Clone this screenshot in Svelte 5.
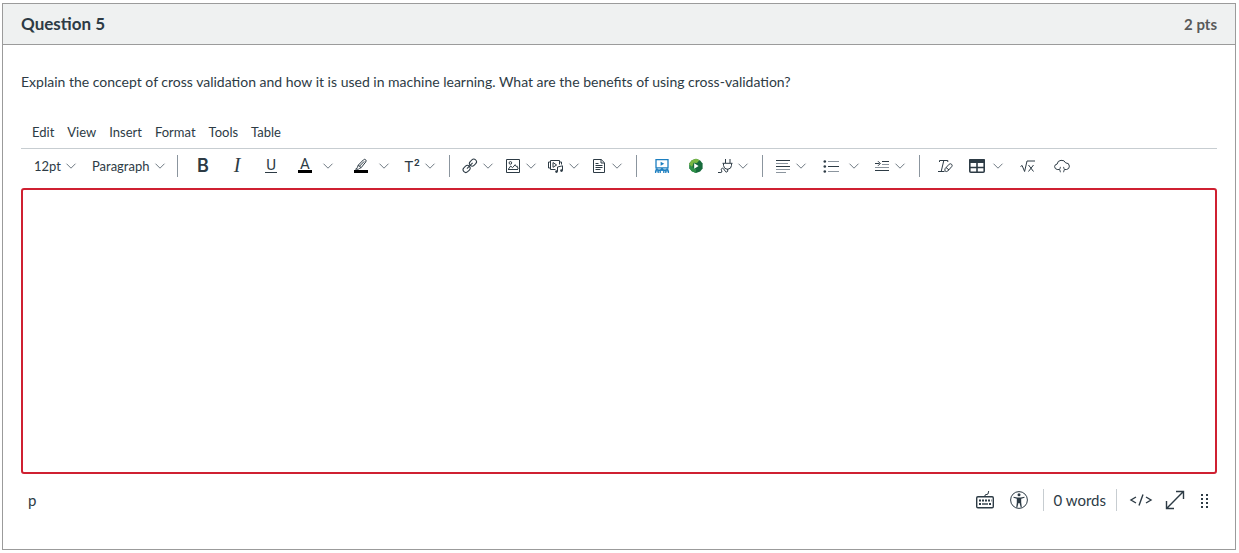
<script>
  const menus = ['Edit', 'View', 'Insert', 'Format', 'Tools', 'Table'];
  let content = $state('');
  const words = $derived(content.trim() ? content.trim().split(/\s+/).length : 0);

  const groups = [
    [
      { id: 'bold', label: 'Bold' },
      { id: 'italic', label: 'Italic' },
      { id: 'underline', label: 'Underline' },
      { id: 'color', label: 'Text color', kind: 'split' },
      { id: 'highlight', label: 'Background color', kind: 'split' },
      { id: 'super', label: 'Superscript and subscript', kind: 'menu' }
    ],
    [
      { id: 'link', label: 'Links', kind: 'menu' },
      { id: 'image', label: 'Images', kind: 'menu' },
      { id: 'media', label: 'Record or upload media', kind: 'menu' },
      { id: 'doc', label: 'Documents', kind: 'menu' }
    ],
    [
      { id: 'studio', label: 'Studio' },
      { id: 'video', label: 'Video library' },
      { id: 'plug', label: 'Apps', kind: 'menu' }
    ],
    [
      { id: 'align', label: 'Align', kind: 'menu' },
      { id: 'list', label: 'Lists', kind: 'split' },
      { id: 'indent', label: 'Indent', kind: 'menu' }
    ],
    [
      { id: 'clear', label: 'Clear formatting' },
      { id: 'table', label: 'Table', kind: 'wide' },
      { id: 'math', label: 'Insert math equation' },
      { id: 'embed', label: 'Embed' }
    ]
  ];
</script>

{#snippet chevron()}
  <svg class="chevron" viewBox="0 0 10 6" aria-hidden="true"><path d="M.5.7 5 5.2 9.5.7" /></svg>
{/snippet}

{#snippet icon(id)}
  <svg class="icon" viewBox="0 0 16 16" aria-hidden="true">
    {#if id === 'bold'}
      <text class="bold" x="8" y="14" text-anchor="middle">B</text>
    {:else if id === 'italic'}
      <text class="italic" x="8" y="14" text-anchor="middle">I</text>
    {:else if id === 'underline'}
      <text class="thin" x="8" y="12" text-anchor="middle">U</text>
      <path d="M2 14.5h12" />
    {:else if id === 'color'}
      <text class="thin" x="8" y="11" text-anchor="middle">A</text>
      <path class="black" d="M1 12h14v3H1z" />
    {:else if id === 'highlight'}
      <path class="black" d="M1 12h14v3H1z" />
      <path d="m5.2 7.2 5.3-5.4q1.2-1 2.2 0t0 2.2L8.2 9.6zM5.2 7.2l-.7 2.2-1.9 1.8h3l.8-.8 1.8-.8M6.5 8.2l4.7-4.8" />
    {:else if id === 'super'}
      <text class="tee" x="0" y="14">T</text>
      <text class="two" x="10" y="8">2</text>
    {:else if id === 'link'}
      <g transform="rotate(-45 8 8)">
        <rect x="-.3" y="5" width="7.6" height="5.4" rx="2.6" />
        <rect x="8.7" y="5" width="7.6" height="5.4" rx="2.6" />
        <path d="M4 7.7h8" />
      </g>
    {:else if id === 'image'}
      <path d="M1.5 1.5h13v13h-13zM3 11.5h10M3.5 11l2.2-3 1.8 1.7 2.7-3 1.2 2 .8-.5 1 2.8" />
      <circle cx="5.4" cy="4.9" r="1.3" />
    {:else if id === 'media'}
      <path d="M7.5 11.5h-5v-9h9v4M2.5 4h-2v6h2M11.5 4h2v2.5M5 4.5v4.8L8.6 7zM9.5 13.5V9l5-1.2v4.7" />
      <circle class="solid" cx="8.5" cy="13.6" r="1.3" />
      <circle class="solid" cx="13.5" cy="12.6" r="1.3" />
    {:else if id === 'doc'}
      <path d="M2.5 1.5h7.7l3.3 3.3v9.7h-11zM10 1.5V5h3.5M4.5 5.5h3M4.5 7.5h7M4.5 9.5h7M4.5 11.5h5" />
    {:else if id === 'studio'}
      <g class="blue">
        <path d="M2 1.7h12v8.2H2z" />
        <path class="solid" d="m6.6 3.8 3.7 2-3.7 2z" />
        <path d="M1.6 15v-2.2h2.6V15M6.2 15v-3h3.6v3M11.8 15v-2.2h2.6V15M4.2 11.5l2 1.5M11.8 11.5l-2 1.5" />
        <g class="solid"><circle cx="2.8" cy="11.5" r="1.2" /><circle cx="8" cy="11.3" r="1.4" /><circle cx="13.2" cy="11.5" r="1.2" /></g>
      </g>
    {:else if id === 'video'}
      <path class="leaf c" d="m8 .8 4.2 1.7 2.4 3v5l-2.4 3L8 15l-4.2-1.8-2.4-3v-5l2.4-3z" />
      <path class="leaf a" d="M8 .8 11.5 2 9 5 5.6 4.8 4 9.5 1.4 7V5.2l2.4-3z" />
      <path class="leaf b" d="m1.4 6.5 3.4 3 3.4 1.8L7.8 15l-4-1.8-2.4-3z" />
      <path class="white" d="m6.2 5.3 4.4 2.7-4.4 2.7z" />
    {:else if id === 'plug'}
      <path d="M8.5 1v4M13 1v4M5.5 5.3h10M6.5 5.5v2q.4 3.4 3.5 3.7h1q3.2-.3 3.5-3.7v-2M10.7 11v2.2q-.6 1.5-2 .6L6.5 10.7q-1.1-1-2 0-.7 1.1.2 2.1.7 1.6-.8 1.7H1" />
    {:else if id === 'align'}
      <path d="M1 2.5h14M1 8.5h14" />
      <path class="soft" d="M1 5.5h12M1 11.5h14M1 14.5h10" />
    {:else if id === 'list'}
      <path class="soft" d="M5 3.5h11M5 13.5h11" />
      <path d="M5 8.5h11" />
      <g class="solid"><circle cx="1.8" cy="3.5" r="1.3" /><circle cx="1.8" cy="8.5" r="1.3" /><circle cx="1.8" cy="13.5" r="1.3" /></g>
    {:else if id === 'indent'}
      <path d="M8 3.5h7M1 12.5h14M1 5.5h4.5M4 3.2l2.3 2.3L4 7.8" />
      <path class="soft" d="M8 6.5h7M1 9.5h14" />
    {:else if id === 'clear'}
      <path d="M2.5 4V2.5h8.3V4M6.8 2.5 4.2 13.5M1 13.5h6.5M8.2 10.5l4-4.3q1.2-.9 2.3 0 1.2 1 .3 2.3l-4 4.5q-1.4 1-2.5.2-1-.9-.1-2.7zM9 9.5l3 2.4" />
    {:else if id === 'table'}
      <rect class="frame" x=".8" y="1.8" width="14.4" height="12.4" rx="1" />
      <path class="frame" d="M8 4v10M1 9.5h14" />
      <path class="solid" d="M0 2q0-1 1-1h14q1 0 1 1v3H0z" />
    {:else if id === 'math'}
      <path d="m.5 8.5 1.6-1 2.5 6L7 3h8M8.5 7l5 6.5M13.5 7l-5 6.5" />
    {:else if id === 'embed'}
      <path d="M5 11.5H3.2Q.7 11 .6 8.6q.2-2.3 2.5-2.5Q3.5 2.7 7 2.3q3.5-.3 4.7 2.6 3.4-.2 3.7 3.2 0 3-2.8 3.4H11M6.8 9.2q-1 .1-.8 1.3 0 1-.7 1.1.8.1.7 1.1-.1 1.2.8 1.3M9.2 9.2q1 .1.8 1.3 0 1 .7 1.1-.8.1-.7 1.1.1 1.2-.8 1.3" />
    {/if}
  </svg>
{/snippet}

<main class="question">
  <header>
    <h1>Question 5</h1>
    <span class="points">2 pts</span>
  </header>

  <div class="body">
    <label class="prompt" for="answer">Explain the concept of cross validation and how it is used in machine learning. What are the benefits of using cross-validation?</label>

    <nav class="menubar" aria-label="Editor menu">
      {#each menus as name}
        <button type="button">{name}</button>
      {/each}
    </nav>

    <div class="toolbar" role="toolbar" aria-label="Formatting">
      <div class="group text">
        <button type="button" class="size">12pt {@render chevron()}</button>
        <button type="button" class="size">Paragraph {@render chevron()}</button>
      </div>
      {#each groups as group}
        <div class="group">
          {#each group as tool}
            {#if tool.kind === 'split'}
              <div class="split">
                <button type="button" class="tool" aria-label={tool.label}>{@render icon(tool.id)}</button>
                <button type="button" class="more" aria-label="{tool.label} options">{@render chevron()}</button>
              </div>
            {:else}
              <button type="button" class={tool.kind ?? 'tool'} aria-label={tool.label}>
                {@render icon(tool.id)}
                {#if tool.kind}{@render chevron()}{/if}
              </button>
            {/if}
          {/each}
        </div>
      {/each}
    </div>

    <textarea id="answer" bind:value={content}></textarea>

    <footer>
      <span>p</span>
      <div class="status">
        <button type="button" aria-label="Keyboard shortcuts">
          <svg class="big" viewBox="0 0 20 20" aria-hidden="true">
            <rect class="case" x="1.7" y="6.7" width="16.6" height="11" rx="1.2" />
            <path d="M10 6.5V5l3-1 .7-3" />
            <path class="keys" d="M4 10.5h12.5M4 14h2" /><path class="keys" d="M14 14h2.3" /><path class="case" d="M7 14h6" />
          </svg>
        </button>
        <button type="button" aria-label="Accessibility checker">
          <svg class="big" viewBox="0 0 20 20" aria-hidden="true">
            <circle cx="10" cy="10" r="8.4" />
            <circle class="solid" cx="10" cy="4.8" r="1.5" />
            <path class="solid" d="M4.5 6.7 8.3 7.4h3.4l3.8-.7v1l-3.3 1v3.6l.6 4.9h-1.1L10.5 13h-1l-1.2 4.6H7.2l.6-4.9V8.7l-3.3-1z" />
          </svg>
        </button>
        <span class="count">{words} words</span>
        <button type="button" class="code" aria-label="HTML editor">
          <svg class="wide-icon" viewBox="0 0 24 20" aria-hidden="true"><path class="line" d="m7 7-5 3 5 3M17 7l5 3-5 3M14 4.5 10 15.5" /></svg>
        </button>
        <button type="button" aria-label="Fullscreen">
          <svg class="big" viewBox="0 0 20 20" aria-hidden="true"><path class="line" d="M1.6 18.4 18.4 1.6M11 1.5h7.5V9M1.5 11v7.5H9" /></svg>
        </button>
        <button type="button" aria-label="Resize editor">
          <svg class="grip" viewBox="0 0 10 16" aria-hidden="true"><path class="dots" d="M2 3h2M2 7h2M2 11h2M2 15h2M7 3h2M7 7h2M7 11h2M7 15h2" /></svg>
        </button>
      </div>
    </footer>
  </div>
</main>

<style>
  :global(body) { background: #fff; }
  .question {
    margin: 3px 3px 3px 2px;
    border: 1px solid #9b9b9b;
    font-family: Lato, "Liberation Sans", sans-serif;
    color: #2d3b45;
  }
  header {
    display: flex;
    align-items: center;
    justify-content: space-between;
    height: 40px;
    padding: 0 18px;
    background: #eff1f1;
    border-bottom: 1px solid #9b9b9b;
  }
  h1 { margin: 0; font-size: 17px; line-height: 24px; }
  .points { font-size: 15px; font-weight: 700; line-height: 24px; color: #595959; }
  .body { padding: 26px 18px 38px; }
  .prompt { display: block; font-size: 14px; line-height: 22px; }
  button {
    display: flex;
    align-items: center;
    flex: none;
    margin: 0;
    padding: 0;
    border: 0;
    background: none;
    color: inherit;
    font: inherit;
    cursor: pointer;
  }
  .menubar {
    display: flex;
    gap: 13px;
    margin-top: 26px;
    padding: 0 11px 3px;
    border-bottom: 1px solid #c7cdd1;
    font-size: 13px;
    line-height: 26px;
  }
  .toolbar { display: flex; align-items: center; padding: 6px 0 11px; }
  .group { display: flex; flex: none; align-items: center; height: 22px; padding: 0 6px 0 8px; }
  .group + .group { border-left: 1px solid #8b959e; }
  .text { padding: 0 12px 0 13px; gap: 16px; font-size: 13px; }
  .size { gap: 5px; }
  .tool { width: 34px; height: 22px; justify-content: center; }
  .split { display: flex; padding-right: 10px; }
  .more { width: 12px; justify-content: center; }
  .menu { width: 43px; height: 22px; padding-left: 4px; gap: 5px; }
  .wide { width: 49px; height: 22px; padding-left: 7px; gap: 8px; }
  svg {
    flex: none;
    display: block;
    fill: none;
    stroke: #2d3b45;
    stroke-width: 1;
    overflow: visible;
  }
  .icon { width: 16px; height: 16px; }
  .chevron { width: 10px; height: 6px; stroke: #6f7a83; }
  .black { fill: #000; stroke: none; }
  .solid { fill: #2d3b45; stroke: none; }
  .soft { stroke: #8b959e; }
  .frame { stroke-width: 1.6; }
  .blue { stroke: #1d7fc0; stroke-width: 1.3; }
  .blue .solid { fill: #1d7fc0; }
  .leaf { stroke: none; }
  .a { fill: #79b843; }
  .b { fill: #2e9048; }
  .c { fill: #176b3c; }
  .white { fill: #fff; stroke: none; }
  text { fill: #2d3b45; stroke: none; }
  .bold { font: 600 18px Inter, sans-serif; }
  .italic { font: italic 20px "Liberation Serif", serif; }
  .thin { font: 400 15px Roboto, sans-serif; }
  .tee { font: 400 15px Inter, sans-serif; }
  .two { font: 700 9px Inter, sans-serif; }
  textarea {
    display: block;
    width: 100%;
    height: 286px;
    box-sizing: border-box;
    padding: 12px;
    border: 2px solid #cf2031;
    border-radius: 3px;
    outline: 0;
    resize: none;
    background: #fff;
    color: inherit;
    font: inherit;
  }
  footer { display: flex; align-items: center; justify-content: space-between; padding: 15px 8px 0 7px; font-size: 15px; line-height: 22px; }
  .status { display: flex; align-items: center; gap: 14px; }
  .big { width: 20px; height: 20px; }
  .case { stroke-width: 1.4; }
  .keys { stroke-width: 2; stroke-dasharray: 2 1; }
  .count { padding: 0 10px; border: solid #c7cdd1; border-width: 0 1px; }
  .code { margin: 0 -2px; }
  .wide-icon { width: 24px; height: 20px; }
  .line { stroke-width: 1.4; }
  .grip { width: 10px; height: 16px; }
  .dots { stroke-width: 2; }
</style>
